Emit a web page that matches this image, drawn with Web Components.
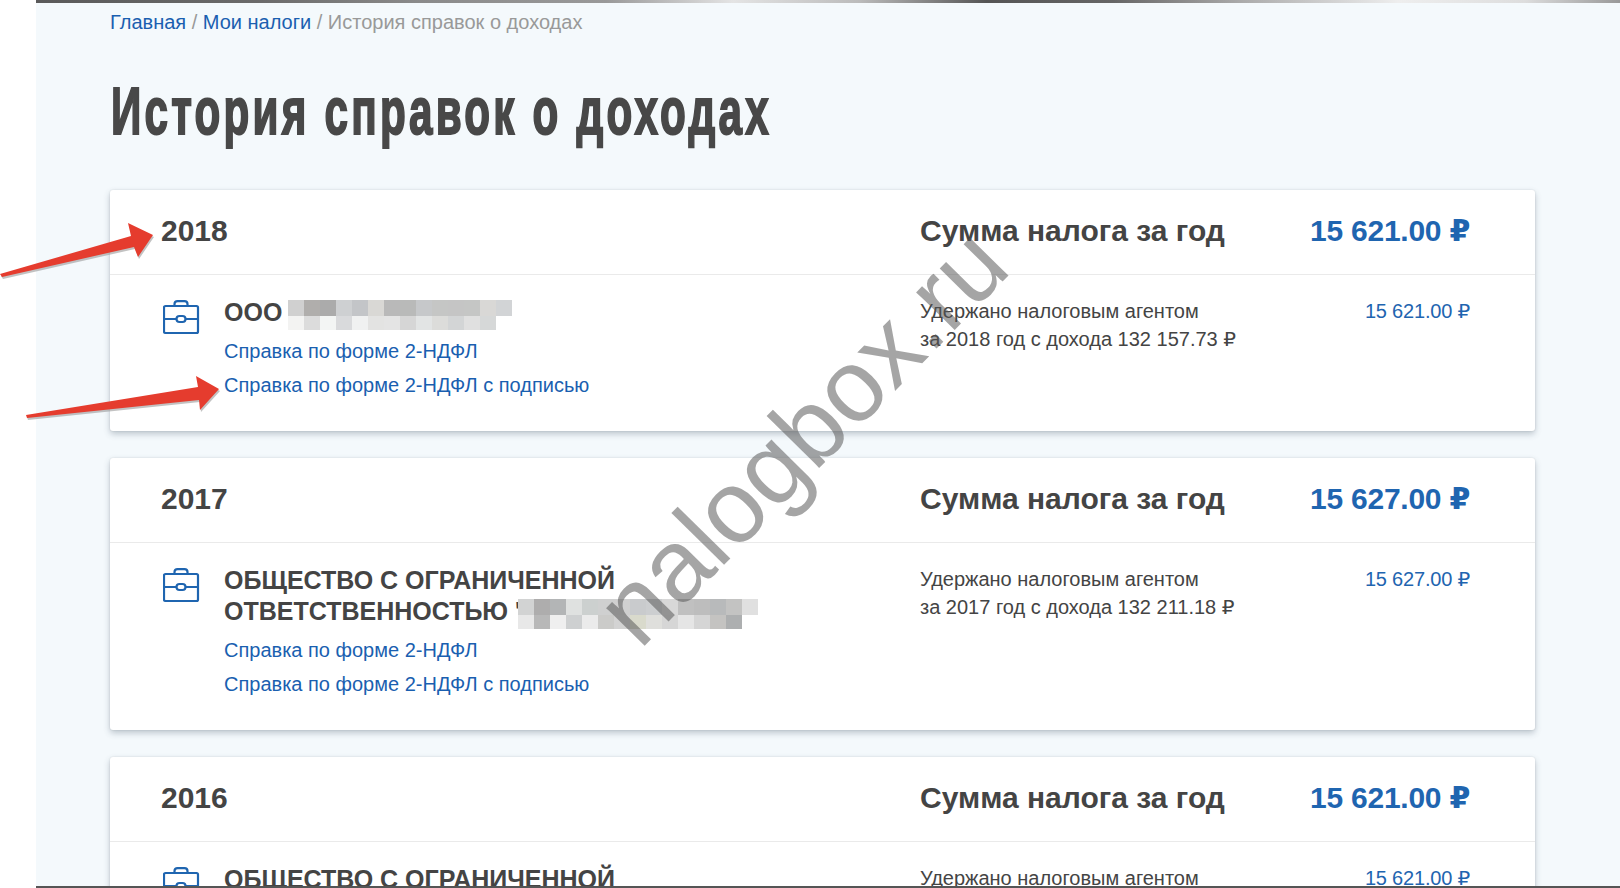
<!DOCTYPE html>
<html lang="ru">
<head>
<meta charset="utf-8">
<title>История справок о доходах</title>
<style>
  html, body { margin: 0; height: 888px; overflow: hidden; background: #fff; }
  body { font-family: "Liberation Sans", Arial, sans-serif; color: #444; }
</style>
</head>
<body>
<tax-page>
  <bread-crumbs></bread-crumbs>
  <page-title>История справок о доходах</page-title>
  <year-card year="2018" total="15 621.00" agent="Удержано налоговым агентом" income="за 2018 год с дохода 132 157.73" paid="15 621.00">
    ООО '<pixel-blur style="margin-left:-7px" rows="d0d0d0,b0aeac,ababab,ced0d2,c3c5c8,d9d8d5,b9b9b9,b9bab9,c6c8ca,c5c6c5,c5c5c5,c5c6c5,d9d8d6,d2d4d6|f3f3f2,dcdcdc,f3f5f4,d9dadc,f0f1f1,e3e3e2,e4e4e4,d6d6d6,e2e4e4,dcdcda,d3d5d6,e0e0e0,d6d8d8"></pixel-blur>
  </year-card>
  <year-card year="2017" total="15 627.00" agent="Удержано налоговым агентом" income="за 2017 год с дохода 132 211.18" paid="15 627.00">
    ОБЩЕСТВО С ОГРАНИЧЕННОЙ<br>ОТВЕТСТВЕННОСТЬЮ '<pixel-blur rows="d2d3d3,aeadad,b3b5b6,dfe1e0,ccd0cf,cfd0d0,d0d0d0,c9cbcd,ccced0,d8d8d8,c0c0c0,bdbdbd,b8babb,c3c3c2,e0e0e0|e8e8e8,b8b8b8,efefef,ced0d1,ebebeb,cbcbc9,d3d3d3,d9dacc,dfdfdc,d6d6d6,e5e5e5,d5d5d5,c4c3c1,adafb0"></pixel-blur>
  </year-card>
  <year-card year="2016" total="15 621.00" agent="Удержано налоговым агентом" income="за 2016 год с дохода 132 157.73" paid="15 621.00">
    ОБЩЕСТВО С ОГРАНИЧЕННОЙ
  </year-card>
  <shot-overlay></shot-overlay>
</tax-page>

<script>
  class TaxPage extends HTMLElement {
    constructor() {
      super();
      this.attachShadow({ mode: 'open' }).innerHTML = `
        <style>
          :host { display: block; height: 888px; margin-left: 36px; background: #f4f9fc; overflow: hidden; }
          .inner { padding: 0 85px 0 74px; }
          /* strip left over from the original screenshot */
          .top { height: 3px; background: linear-gradient(90deg, #5a5a5a 0, #6a6a6a 14%, #8a8a8a 24%, #999 36%, #e4e4e4 44%, #bbb 52%, #555 60%, #666 68%, #aaa 76%, #eee 86%, #ddd 94%, #999 100%); }
        </style>
        <div class="top"></div>
        <div class="inner"><slot></slot></div>
      `;
    }
  }

  class BreadCrumbs extends HTMLElement {
    constructor() {
      super();
      this.attachShadow({ mode: 'open' }).innerHTML = `
        <style>
          :host { display: block; padding-top: 8px; height: 27px; font-size: 20px; line-height: 22px; color: #999; }
          a { color: #1a5fb0; text-decoration: none; }
        </style>
        <a href="#">Главная</a> / <a href="#">Мои налоги</a> / История справок о доходах
      `;
    }
  }

  class PageTitle extends HTMLElement {
    constructor() {
      super();
      this.attachShadow({ mode: 'open' }).innerHTML = `
        <style>
          :host { display: block; height: 152px; }
          h1 {
            margin: 0 0 0 1px; padding-top: 33px; width: max-content;
            font: bold 66px/80px "Liberation Sans", sans-serif;
            letter-spacing: 5px; color: #484848; white-space: nowrap;
            -webkit-text-stroke: 2px #484848;
            transform: scaleX(.64); transform-origin: left center;
          }
        </style>
        <h1><slot></slot></h1>
      `;
    }
  }

  const cardTemplate = document.createElement('template');
  cardTemplate.innerHTML = `
    <style>
      :host {
        display: block; margin-bottom: 27px; background: #fff; border-radius: 3px;
        box-shadow: 0 0 2px rgba(0,0,0,.12), 0 3px 6px rgba(60,80,100,.3);
      }
      .row { display: grid; grid-template-columns: 759px 1fr auto; padding: 0 65px 0 51px; }
      .head { height: 85px; align-items: center; border-bottom: 1px solid #eaeaea; box-sizing: border-box; }
      .year { font-size: 30px; font-weight: bold; color: #444; padding-bottom: 2px; }
      .label { font-size: 30px; font-weight: bold; color: #444; padding-bottom: 2px; }
      .total { font-size: 30px; font-weight: bold; color: #1f65b0; padding-bottom: 3px; letter-spacing: -.25px; }
      .body { padding-top: 23px; padding-bottom: 33px; }
      .org { display: flex; gap: 24px; }
      svg { flex: none; margin: 2px 0 0 2px; width: 37px; height: 35px; }
      .name { font-size: 25px; line-height: 31px; font-weight: bold; color: #444; white-space: nowrap; margin-top: -1px; }
      .links { display: flex; flex-direction: column; margin-top: 10px; gap: 8px; }
      a { font-size: 20px; line-height: 26px; color: #1a5fb0; text-decoration: none; white-space: nowrap; }
      .paid-text { font-size: 20px; line-height: 28px; color: #444; margin-top: -1px; }
      .paid { font-size: 20px; line-height: 28px; color: #1f65b0; margin-top: -1px; letter-spacing: -.2px; }
      .rub { font-family: "DejaVu Sans", sans-serif; }
    </style>
    <div class="row head">
      <div class="year"></div>
      <div class="label">Сумма налога за год</div>
      <div class="total"></div>
    </div>
    <div class="row body">
      <div class="org">
        <svg viewBox="0 0 37 35" fill="none" stroke="#1f65b0" stroke-width="2.2" stroke-linejoin="round">
          <rect x="1" y="6" width="34" height="27" rx="1.5"/>
          <path d="M1 19H13.5M22.5 19H35"/>
          <rect x="13.5" y="16" width="9" height="6" rx="3"/>
          <path d="M11.5 6V4Q11.5 1.2 14.5 1.2H21.5Q24.5 1.2 24.5 4V6"/>
        </svg>
        <div>
          <div class="name"><slot></slot></div>
          <div class="links">
            <a href="#">Справка по форме 2-НДФЛ</a>
            <a href="#">Справка по форме 2-НДФЛ с подписью</a>
          </div>
        </div>
      </div>
      <div class="paid-text"><span class="agent"></span><br><span class="income"></span> <span class="rub">₽</span></div>
      <div class="paid"></div>
    </div>
  `;

  class YearCard extends HTMLElement {
    constructor() {
      super();
      this.attachShadow({ mode: 'open' }).appendChild(cardTemplate.content.cloneNode(true));
    }

    connectedCallback() {
      const root = this.shadowRoot;
      root.querySelector('.year').textContent = this.getAttribute('year');
      root.querySelector('.agent').textContent = this.getAttribute('agent');
      root.querySelector('.income').textContent = this.getAttribute('income');
      root.querySelector('.total').innerHTML = this.getAttribute('total') + ' <span class="rub">₽</span>';
      root.querySelector('.paid').innerHTML = this.getAttribute('paid') + ' <span class="rub">₽</span>';
    }
  }

  // pixelated patch hiding the employer name
  class PixelBlur extends HTMLElement {
    constructor() {
      super();
      this.attachShadow({ mode: 'open' });
    }

    connectedCallback() {
      const rows = this.getAttribute('rows').split('|').map((row) => row.split(','));
      const cells = (row) => row.map((c) => `<i style="background:#${c}"></i>`).join('');
      this.shadowRoot.innerHTML = `
        <style>
          :host { display: inline-block; vertical-align: -9px; margin: -4px 0 -4px -3px; }
          div { display: flex; }
          i { display: block; width: 16px; height: 16px; }
          div + div i { height: 14px; }
        </style>
        ${rows.map((row) => `<div>${cells(row)}</div>`).join('')}
      `;
    }
  }

  class ShotOverlay extends HTMLElement {
    constructor() {
      super();
      this.attachShadow({ mode: 'open' }).innerHTML = `
        <style>
          :host { display: block; position: absolute; inset: 0; pointer-events: none; overflow: hidden; }
          .mark {
            position: absolute; left: 535px; top: 376px; white-space: nowrap; transform: rotate(-45.5deg);
            font-size: 102px; line-height: 120px; color: rgba(85,85,85,.53);
          }
          svg { position: absolute; left: 0; top: 0; }
          .bottom { position: absolute; left: 36px; right: 0; bottom: 0; height: 2px; background: #555; }
        </style>
        <div class="mark">nalogbox.ru</div>
        <svg width="1620" height="888">
          <g fill="#9a9a9a" opacity=".6" transform="translate(1 2)">
            <path d="M0 274L131 236L128 223L153 235L138 257L134 247L2 277Z"/>
            <path d="M26 415L198 387L196 376L219 389L200 410L199 400L27 418Z"/>
          </g>
          <g fill="#e53c2e">
            <path d="M0 274L131 236L128 223L153 235L138 257L134 247L2 277Z"/>
            <path d="M26 415L198 387L196 376L219 389L200 410L199 400L27 418Z"/>
          </g>
        </svg>
        <div class="bottom"></div>
      `;
    }
  }

  customElements.define('tax-page', TaxPage);
  customElements.define('bread-crumbs', BreadCrumbs);
  customElements.define('page-title', PageTitle);
  customElements.define('year-card', YearCard);
  customElements.define('pixel-blur', PixelBlur);
  customElements.define('shot-overlay', ShotOverlay);
</script>
</body>
</html>
